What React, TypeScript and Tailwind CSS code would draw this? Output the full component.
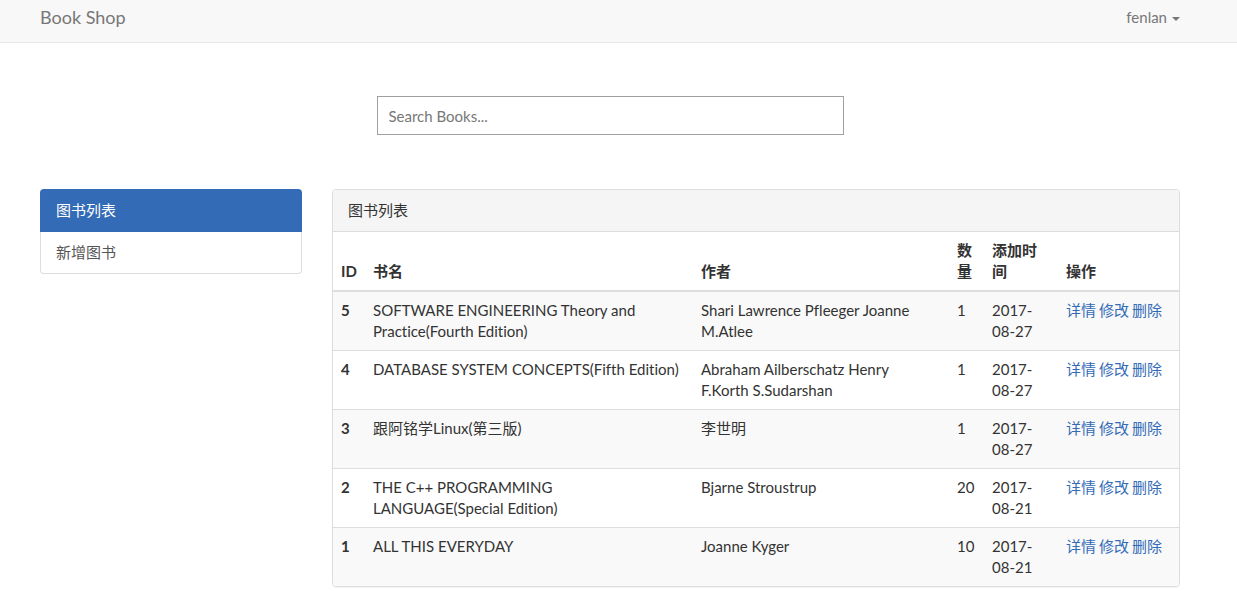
const books = [
  { id: 5, title: "SOFTWARE ENGINEERING Theory and Practice(Fourth Edition)", author: "Shari Lawrence Pfleeger Joanne M.Atlee", count: 1, date: "2017-08-27" },
  { id: 4, title: "DATABASE SYSTEM CONCEPTS(Fifth Edition)", author: "Abraham Ailberschatz Henry F.Korth\u00a0S.Sudarshan", count: 1, date: "2017-08-27" },
  { id: 3, title: "跟阿铭学Linux(第三版)", author: "李世明", count: 1, date: "2017-08-27" },
  { id: 2, title: "THE C++ PROGRAMMING LANGUAGE(Special Edition)", author: "Bjarne Stroustrup", count: 20, date: "2017-08-21" },
  { id: 1, title: "ALL THIS EVERYDAY", author: "Joanne Kyger", count: 10, date: "2017-08-21" },
];

const columns = [
  { label: "ID", width: "w-8" },
  { label: "书名", width: "w-[328px]" },
  { label: "作者", width: "w-64" },
  { label: "数量", width: "w-[35px]" },
  { label: "添加时间", width: "w-[74px]" },
  { label: "操作", width: "" },
];

const actions = ["详情", "修改", "删除"];

function Navbar() {
  return (
    <nav className="border-b border-[#e7e7e7] bg-[#f8f8f8] pr-[17px] text-[#777777]">
      <div className="mx-auto flex h-[42px] max-w-[1170px] items-start justify-between px-[15px] pt-[7px]">
        <a href="#" className="text-[18px] leading-[21px]">Book Shop</a>
        <button type="button" className="flex items-center gap-[5px] leading-[21px]">
          fenlan
          <span className="mt-0.5 border-x-4 border-t-4 border-x-transparent border-t-[#777777]" />
        </button>
      </div>
    </nav>
  );
}

function Sidebar() {
  return (
    <aside className="w-[262px] shrink-0">
      <a href="#" className="block rounded-t-[4px] bg-[#336bb6] px-4 py-[11px] leading-[21px] text-white">图书列表</a>
      <a href="#" className="block rounded-b-[4px] border border-t-0 border-[#dddddd] px-[15px] py-[10px] leading-[21px] text-[#555555]">新增图书</a>
    </aside>
  );
}

function BookTable() {
  return (
    <section className="min-w-0 flex-1 overflow-hidden rounded-[4px] border border-[#dddddd] shadow-[0_1px_1px_rgba(0,0,0,0.05)]">
      <h2 className="border-b border-[#dddddd] bg-[#f5f5f5] px-[15px] py-[10px] leading-[21px]">图书列表</h2>
      <table className="w-full table-fixed border-collapse text-left leading-[21px]">
        <thead>
          <tr className="border-b-2 border-[#dddddd]">
            {columns.map((column) => (
              <th key={column.label} scope="col" className={`p-2 align-bottom font-bold ${column.width}`}>{column.label}</th>
            ))}
          </tr>
        </thead>
        <tbody>
          {books.map((book) => (
            <tr key={book.id} className="border-t border-[#dddddd] align-top odd:bg-[#f9f9f9]">
              <th scope="row" className="p-2 font-bold">{book.id}</th>
              <td className="p-2">{book.title}</td>
              <td className="p-2">{book.author}</td>
              <td className="p-2">{book.count}</td>
              <td className="p-2">{book.date}</td>
              <td className="p-2">
                <div className="flex gap-[3px] whitespace-nowrap text-[#336bb6]">
                  {actions.map((action) => (
                    <a key={action} href="#">{action}</a>
                  ))}
                </div>
              </td>
            </tr>
          ))}
        </tbody>
      </table>
    </section>
  );
}

export default function App() {
  return (
    <div className="bg-white font-['Lato','Noto_Sans_CJK_SC',sans-serif] text-[15px] leading-[21px] text-[#333333] [font-variant-ligatures:none]">
      <Navbar />
      <main className="pr-[17px]">
        <div className="mx-auto max-w-[1170px] px-[15px] pb-[11px]">
          <form role="search" className="flex justify-center pt-[53px]">
            <input type="search" aria-label="Search Books" placeholder="Search Books..." className="h-[39px] w-full max-w-[467px] border border-[#a0a0a0] px-[11px] outline-none placeholder:text-[#777777]" />
          </form>
          <div className="mt-[54px] flex items-start gap-[30px]">
            <Sidebar />
            <BookTable />
          </div>
        </div>
      </main>
    </div>
  );
}
